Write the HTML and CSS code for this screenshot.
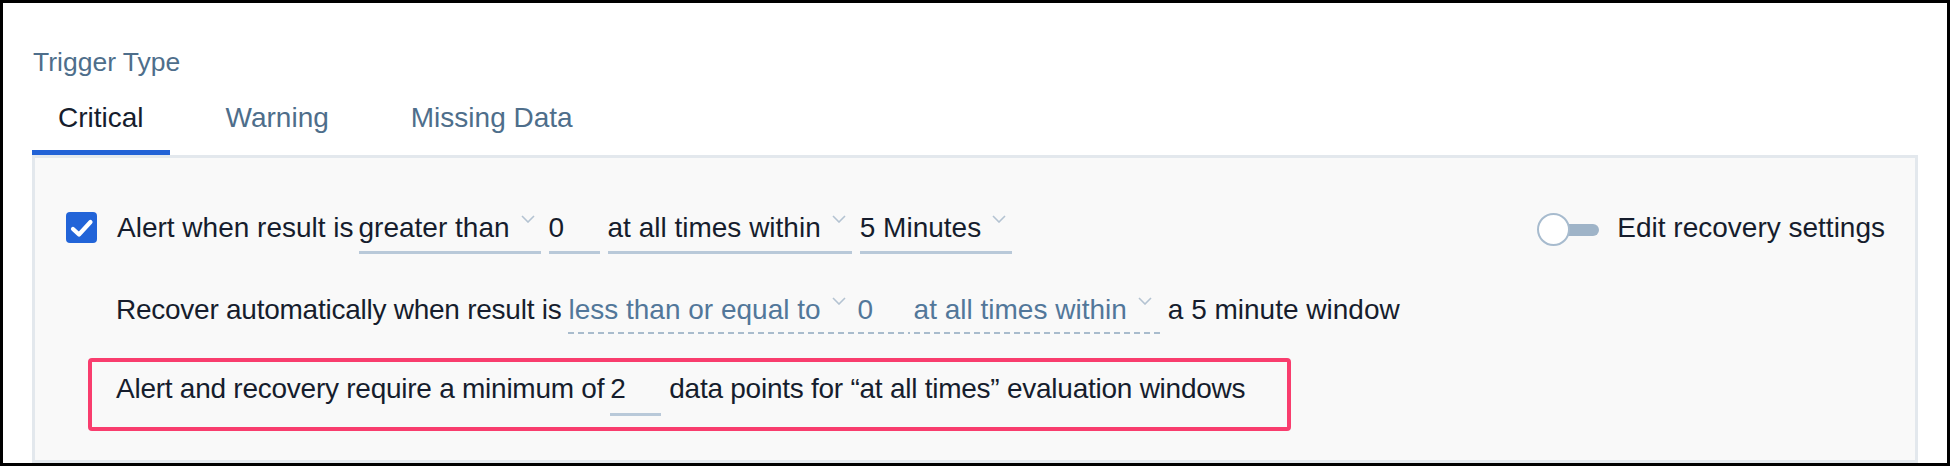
FILE: index.html
```html
<!DOCTYPE html>
<html>
<head>
<meta charset="utf-8">
<link rel="stylesheet" href="styles.css">
</head>
<body>
<div class="frame">
  <div class="title">Trigger Type</div>
  <div class="tabs">
    <div class="tab active">Critical</div>
    <div class="tab">Warning</div>
    <div class="tab">Missing Data</div>
  </div>
  <div class="panel">
    <div class="row row1">
      <svg class="checkbox" width="31" height="31" viewBox="0 0 31 31"><rect x="0" y="0" width="31" height="31" rx="4" fill="#2264d8"/><path d="M7 17 L13 22.5 L24.5 10" fill="none" stroke="#fff" stroke-width="4.2" stroke-linecap="round" stroke-linejoin="round"/></svg>
      <span class="txt first">Alert when result is</span>
      <span class="sel sel-gap-s">greater than<svg class="chev" width="14" height="8" viewBox="0 0 14 8"><polyline points="1,1 7,7 13,1" fill="none" stroke="#b4c3d2" stroke-width="1.6"/></svg></span>
      <span class="sel field">0</span>
      <span class="sel">at all times within<svg class="chev" width="14" height="8" viewBox="0 0 14 8"><polyline points="1,1 7,7 13,1" fill="none" stroke="#b4c3d2" stroke-width="1.6"/></svg></span>
      <span class="sel">5 Minutes<svg class="chev" width="14" height="8" viewBox="0 0 14 8"><polyline points="1,1 7,7 13,1" fill="none" stroke="#b4c3d2" stroke-width="1.6"/></svg></span>
      <div class="toggle-group">
        <div class="toggle"><span class="knob"></span><span class="track"></span></div>
        <span class="txt">Edit recovery settings</span>
      </div>
    </div>
    <div class="row row2">
      <span class="txt">Recover automatically when result is</span>
      <span class="dsel first-d">less than or equal to<svg class="chev" width="14" height="8" viewBox="0 0 14 8"><polyline points="1,1 7,7 13,1" fill="none" stroke="#b4c3d2" stroke-width="1.6"/></svg></span>
      <span class="dsel dfield">0</span>
      <span class="dsel">at all times within<svg class="chev" width="14" height="8" viewBox="0 0 14 8"><polyline points="1,1 7,7 13,1" fill="none" stroke="#b4c3d2" stroke-width="1.6"/></svg></span>
      <span class="txt after">a 5 minute window</span>
    </div>
    <div class="highlight">
      <span class="txt">Alert and recovery require a minimum of</span>
      <span class="sel field num">2</span>
      <span class="txt">data points for “at all times” evaluation windows</span>
    </div>
  </div>
</div>
</body>
</html>
```

FILE: styles.css
```css
html, body {
  margin: 0;
  padding: 0;
  background: #ffffff;
}

body {
  font-family: "Liberation Sans", Arial, sans-serif;
  color: #161d2d;
}

.frame {
  height: 466px;
  box-sizing: border-box;
  border: 3px solid #000;
  padding: 0 29px;
  display: flex;
  flex-direction: column;
  background: #ffffff;
  overflow: hidden;
}

.title {
  margin-top: 43px;
  padding-left: 1px;
  font-size: 26.5px;
  line-height: 32px;
  color: #4e6e8b;
}

.tabs {
  display: flex;
  gap: 30px;
  margin-top: 24px;
}

.tab {
  font-size: 28px;
  line-height: 32px;
  padding: 0 26px 16px;
  border-bottom: 5px solid transparent;
  color: #4e6e8b;
}

.tab.active {
  color: #161d2d;
  border-bottom-color: #2262d6;
}

.panel {
  flex: 1;
  border: 3px solid #e3e8ed;
  background: #f9f9f9;
  padding: 54px 30px 0 0;
  display: flex;
  flex-direction: column;
}

.row {
  display: flex;
  align-items: flex-start;
  font-size: 28px;
  line-height: 32px;
}

.row1 {
  padding-left: 31px;
}

.checkbox {
  flex: none;
  display: block;
}

.txt {
  white-space: nowrap;
}

.txt.first {
  margin-left: 20px;
}

.sel {
  display: inline-flex;
  align-items: flex-start;
  padding-bottom: 7px;
  border-bottom: 3px solid #b9c9d9;
  margin-left: 8px;
  padding-right: 6px;
  white-space: nowrap;
}

.sel.sel-gap-s {
  margin-left: 5px;
}

.sel.field {
  min-width: 51px;
  box-sizing: border-box;
  padding-right: 0;
}

.chev {
  flex: none;
  margin-left: 11px;
  margin-top: 3px;
  display: block;
}

.toggle-group {
  margin-left: auto;
  display: flex;
  align-items: flex-start;
  gap: 18px;
}

.toggle {
  display: flex;
  align-items: center;
  margin-top: 1px;
  height: 33px;
}

.knob {
  width: 33px;
  height: 33px;
  box-sizing: border-box;
  border: 2.5px solid #a7bbce;
  border-radius: 50%;
  background: #ffffff;
  position: relative;
  z-index: 1;
}

.track {
  width: 46px;
  height: 12px;
  border-radius: 6px;
  background: #9fb4c8;
  margin-left: -17px;
}

.row2 {
  margin-top: 40px;
  padding-left: 81px;
  letter-spacing: -0.25px;
}

.dsel {
  display: inline-flex;
  align-items: flex-start;
  padding-right: 8px;
  margin-left: 4px;
  color: #52779a;
  white-space: nowrap;
  letter-spacing: 0;
  background-image: repeating-linear-gradient(to right, #a9bccd 0 6px, transparent 6px 10px);
  background-size: 100% 2px;
  background-position: left bottom;
  background-repeat: no-repeat;
  padding-bottom: 8px;
}

.dsel.first-d {
  margin-left: 7px;
}

.dsel.dfield {
  min-width: 52px;
  box-sizing: border-box;
  padding-right: 0;
}

.txt.after {
  margin-left: 8px;
  letter-spacing: 0;
}

.highlight {
  align-self: flex-start;
  margin-top: 24px;
  margin-left: 53px;
  border: 4px solid #f93d6e;
  border-radius: 4px;
  padding: 11px 42px 11px 24px;
  display: flex;
  align-items: flex-start;
  font-size: 28px;
  line-height: 32px;
  letter-spacing: -0.25px;
}

.sel.num {
  margin-left: 6px;
  margin-right: 8px;
  padding-bottom: 8px;
}
```
